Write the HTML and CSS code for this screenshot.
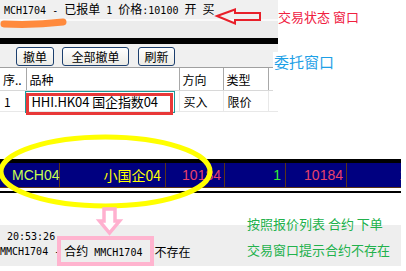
FILE: index.html
```html
<!DOCTYPE html>
<html lang="zh-CN">
<head>
  <meta charset="UTF-8" />
  <title>委托窗口说明</title>
  <link rel="stylesheet" href="styles.css">
</head>
<body>
  <div class="canvas">

    <!-- 交易状态 -->
    <div class="tradebar">
      <div class="trade-text">MCH1704 - <span class="cj">已报单</span> 1 <span class="cj">价格</span>:10100 <span class="cj">开</span> <span class="cj">买</span></div>
    </div>

    <!-- 委托窗口 -->
    <div class="orderwin">
      <div class="toolbar">
        <button class="btn btn-cancel">撤单</button>
        <button class="btn btn-all">全部撤单</button>
        <button class="btn btn-refresh">刷新</button>
      </div>
      <table class="grid">
        <colgroup>
          <col style="width:26px"><col style="width:153px"><col style="width:44px"><col style="width:45px"><col>
        </colgroup>
        <thead>
          <tr><th>序..</th><th>品种</th><th>方向</th><th>类型</th><th class="blank"></th></tr>
        </thead>
        <tbody>
          <tr><td>1</td><td class="sym">HHI.HK04 国企指数04</td><td>买入</td><td>限价</td><td class="blank"></td></tr>
        </tbody>
      </table>
    </div>

    <!-- 报价列表 -->
    <div class="quote">
      <div class="quote-row">
        <div class="qc qc-code">MCH04</div>
        <div class="qc qc-name">小国企04</div>
        <div class="qc qc-red">10184</div>
        <div class="qc qc-vol">1</div>
        <div class="qc qc-red">10184</div>
        <div class="qc qc-last"><span>1</span></div>
      </div>
    </div>

    <!-- 状态栏 -->
    <div class="status">
      <div class="status-time">20:53:26</div>
      <div class="status-msg">
        <span>MMCH1704 -</span>
        <span class="hl-box"><span class="cj">合约</span> MMCH1704</span>
        <span class="cj">不存在</span>
      </div>
    </div>

    <!-- 标注 -->
    <div class="note note-trade">交易状态 窗口</div>
    <div class="note note-order">委托窗口</div>
    <div class="note note-green note-g1">按照报价列表 合约 下单</div>
    <div class="note note-green note-g2">交易窗口提示合约不存在</div>
    <div class="focus-rect"></div>
    <div class="red-rect"></div>

    <svg class="marks" width="406" height="271" viewBox="0 0 406 271">
      <path d="M4 24 Q34 25.5 63 22" fill="none" stroke="#ff8a3d" stroke-width="7" stroke-linecap="round"/>
      <polygon points="217,16 235,9.5 235,13 260,13 260,20 235,20 235,23.5" fill="none" stroke="#e8202a" stroke-width="2"/>
      <ellipse cx="105.5" cy="171.5" rx="104.5" ry="34.5" fill="none" stroke="#ffff00" stroke-width="5"/>
      <polygon points="104,209 115,209 115,221 119.5,221 109.5,233 99.5,221 104,221" fill="#fff" stroke="#ffb0cf" stroke-width="3.5"/>
    </svg>
  </div>
</body>
</html>
```

FILE: styles.css
```css
/* Page */
body {
  margin: 0;
  background: #ffffff;
  font-family: "Noto Sans CJK SC", sans-serif;
  color: #000;
}

.canvas {
  position: relative;
  width: 406px;
  height: 271px;
  overflow: hidden;
}

.cj {
  font-family: "Noto Sans CJK SC", sans-serif;
  font-size: 12px;
}

/* Trade status bar */
.tradebar {
  width: 278px;
  height: 38px;
  background: linear-gradient(#f0f0f0 0, #f0f0f0 19px, #fafafa 19px, #fafafa 21px, #ececec 21px);
  border-bottom: 6px solid #000;
}

.trade-text {
  padding: 2px 0 0 4px;
  font-family: "DejaVu Sans Mono", monospace;
  font-size: 10px;
  line-height: 14px;
  white-space: pre;
}

/* Order window */
.orderwin {
  width: 278px;
  background: #f0f0f0;
}

.toolbar {
  display: flex;
  height: 24px;
  padding: 3px 0 0 16px;
  box-sizing: border-box;
  border-bottom: 1px solid #a0a0a0;
}

.btn {
  height: 19px;
  padding: 0;
  margin-right: 8px;
  font-family: "Noto Sans CJK SC", sans-serif;
  font-size: 12px;
  line-height: 17px;
  color: #000;
  background: linear-gradient(#ffffff, #ecebe6);
  border: 1px solid #1c3f6e;
  border-radius: 3px;
}

.btn-cancel { width: 38px; }
.btn-all { width: 67px; margin-right: 9px; }
.btn-refresh { width: 37px; }

.grid {
  width: 278px;
  table-layout: fixed;
  border-collapse: collapse;
  background: #fff;
  font-size: 12px;
}

.grid th {
  height: 22px;
  padding: 0 0 0 3px;
  text-align: left;
  font-weight: normal;
  border-right: 1px solid #a8a8a8;
  border-bottom: 1px solid #d8d8d8;
  white-space: nowrap;
  overflow: hidden;
}

.grid td {
  height: 20px;
  padding: 0 0 0 4px;
  border-right: 1px solid #e8e8e8;
  border-bottom: 1px solid #e8e8e8;
  white-space: nowrap;
  overflow: hidden;
}

.grid .sym {
  padding-left: 5px;
  font-size: 13px;
  letter-spacing: -0.1px;
}

.grid .blank { border-right: none; }

/* Quote list row */
.quote {
  width: 401px;
  margin-top: 47px;
  border-top: 4px solid #000;
  padding-bottom: 3px;
  border-bottom: 2px solid #000;
  background: #fff;
}

.quote-row {
  display: flex;
  height: 24px;
  background: #000080;
  border-bottom: 1px solid #5a3418;
  font-family: "Liberation Sans", sans-serif;
  font-size: 14px;
  line-height: 24px;
  overflow: hidden;
}

.qc {
  box-sizing: border-box;
  border-right: 1px solid #5a3418;
  text-align: right;
  padding-right: 4px;
  white-space: nowrap;
}

.qc-code { width: 60px; text-align: left; padding-left: 12px; color: #c8ff50; }
.qc-name { width: 106px; color: #ffff00; font-family: "Noto Sans CJK SC", sans-serif; }
.qc-red { width: 59px; color: #e8426a; padding-right: 3px; }
.qc-red + .qc-vol + .qc-red { width: 61px; }
.qc-vol { width: 61px; color: #33ee33; }
.qc-last { flex: 1; border-right: none; color: #e8426a; padding-right: 0; margin-right: -6px; }

/* Status bar */
.status {
  width: 401px;
  height: 41px;
  margin-top: 32px;
  background: #eeeeee;
  font-family: "DejaVu Sans Mono", monospace;
  font-size: 10px;
}

.status-time {
  padding: 6px 0 0 7px;
  line-height: 12px;
}

.status-msg {
  display: flex;
  align-items: center;
  height: 14px;
  margin-top: 1px;
  white-space: pre;
}

.hl-box {
  height: 30px;
  margin: -8px 0 -8px -3px;
  padding: 0 8px 0 3px;
  box-sizing: border-box;
  border: 4px solid #ffb4cf;
  background: #eeeeee;
  line-height: 22px;
}

/* Annotations */
.note {
  position: absolute;
  white-space: nowrap;
}

.note-trade {
  left: 278px;
  top: 7px;
  font-size: 13px;
  color: #f0203f;
}

.note-order {
  left: 273px;
  top: 52px;
  width: 118px;
  height: 40px;
  padding-left: 1px;
  background: #fff;
  font-size: 15px;
  line-height: 20px;
  color: #1ea0e6;
}

.note-green {
  font-size: 13px;
  color: #22b14c;
}

.note-g1 { left: 247px; top: 214px; }
.note-g2 { left: 247px; top: 240px; }

.focus-rect {
  position: absolute;
  left: 25px;
  top: 91px;
  width: 148px;
  height: 20px;
  border: 1px solid #1b9a9a;
}

.red-rect {
  position: absolute;
  left: 26px;
  top: 93px;
  width: 141px;
  height: 16px;
  border: 3px solid #e83838;
}

.marks {
  position: absolute;
  left: 0;
  top: 0;
  pointer-events: none;
}
```
